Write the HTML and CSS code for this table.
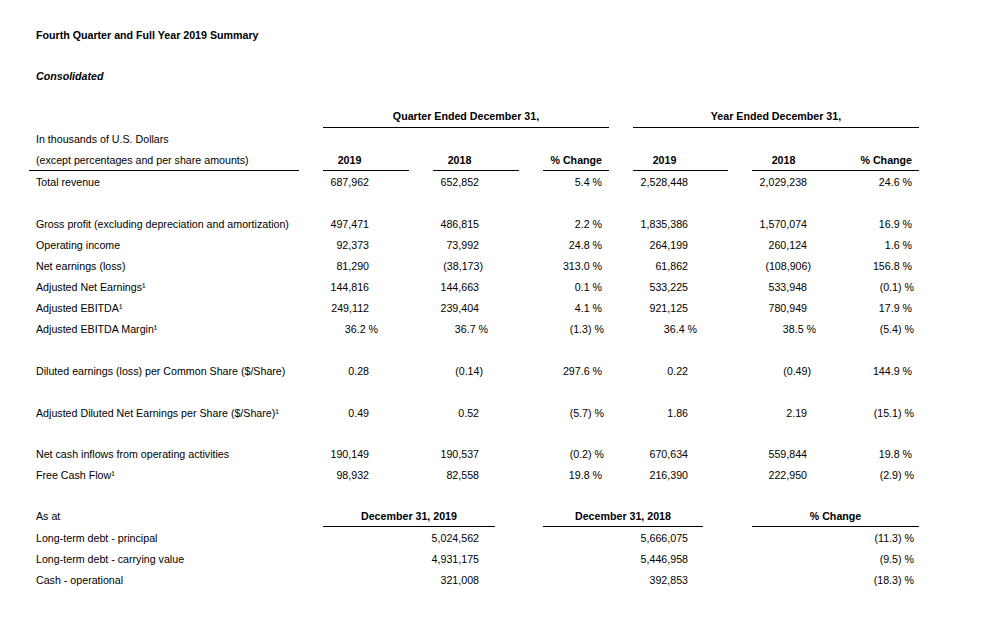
FILE: index.html
```html
<!DOCTYPE html>
<html>
<head>
<meta charset="utf-8">
<title>Fourth Quarter and Full Year 2019 Summary</title>
<link rel="stylesheet" href="styles.css">
</head>
<body>
<div class="page">
  <h1 class="title">Fourth Quarter and Full Year 2019 Summary</h1>
  <h2 class="sub">Consolidated</h2>

  <div class="tbl">
    <div class="row grp">
      <div class="grp-q">Quarter Ended December 31,</div>
      <div class="grp-y">Year Ended December 31,</div>
    </div>
    <div class="row"><div class="lab">In thousands of U.S. Dollars</div></div>
    <div class="row">
      <div class="lab rule">(except percentages and per share amounts)</div>
      <div class="q19 hq">2019</div>
      <div class="q18 hq">2018</div>
      <div class="qp hp">% Change</div>
      <div class="y19 hy">2019</div>
      <div class="y18 hy">2018</div>
      <div class="yp hp">% Change</div>
    </div>
    <div class="row">
      <div class="lab">Total revenue</div>
      <div class="q19 num">687,962</div>
      <div class="q18 num">652,852</div>
      <div class="qp pc">5.4 %</div>
      <div class="y19 num">2,528,448</div>
      <div class="y18 num">2,029,238</div>
      <div class="yp pc">24.6 %</div>
    </div>
    <div class="row"></div>
    <div class="row">
      <div class="lab">Gross profit (excluding depreciation and amortization)</div>
      <div class="q19 num">497,471</div>
      <div class="q18 num">486,815</div>
      <div class="qp pc">2.2 %</div>
      <div class="y19 num">1,835,386</div>
      <div class="y18 num">1,570,074</div>
      <div class="yp pc">16.9 %</div>
    </div>
    <div class="row">
      <div class="lab">Operating income</div>
      <div class="q19 num">92,373</div>
      <div class="q18 num">73,992</div>
      <div class="qp pc">24.8 %</div>
      <div class="y19 num">264,199</div>
      <div class="y18 num">260,124</div>
      <div class="yp pc">1.6 %</div>
    </div>
    <div class="row">
      <div class="lab">Net earnings (loss)</div>
      <div class="q19 num">81,290</div>
      <div class="q18 num"><span class="neg">(38,173)</span></div>
      <div class="qp pc">313.0 %</div>
      <div class="y19 num">61,862</div>
      <div class="y18 num"><span class="neg">(108,906)</span></div>
      <div class="yp pc">156.8 %</div>
    </div>
    <div class="row">
      <div class="lab">Adjusted Net Earnings¹</div>
      <div class="q19 num">144,816</div>
      <div class="q18 num">144,663</div>
      <div class="qp pc">0.1 %</div>
      <div class="y19 num">533,225</div>
      <div class="y18 num">533,948</div>
      <div class="yp pc"><span class="negp">(0.1) %</span></div>
    </div>
    <div class="row">
      <div class="lab">Adjusted EBITDA¹</div>
      <div class="q19 num">249,112</div>
      <div class="q18 num">239,404</div>
      <div class="qp pc">4.1 %</div>
      <div class="y19 num">921,125</div>
      <div class="y18 num">780,949</div>
      <div class="yp pc">17.9 %</div>
    </div>
    <div class="row">
      <div class="lab">Adjusted EBITDA Margin¹</div>
      <div class="q19 num"><span class="pct">36.2 %</span></div>
      <div class="q18 num"><span class="pct">36.7 %</span></div>
      <div class="qp pc"><span class="negp">(1.3) %</span></div>
      <div class="y19 num"><span class="pct">36.4 %</span></div>
      <div class="y18 num"><span class="pct">38.5 %</span></div>
      <div class="yp pc"><span class="negp">(5.4) %</span></div>
    </div>
    <div class="row"></div>
    <div class="row">
      <div class="lab">Diluted earnings (loss) per Common Share ($/Share)</div>
      <div class="q19 num">0.28</div>
      <div class="q18 num"><span class="neg">(0.14)</span></div>
      <div class="qp pc">297.6 %</div>
      <div class="y19 num">0.22</div>
      <div class="y18 num"><span class="neg">(0.49)</span></div>
      <div class="yp pc">144.9 %</div>
    </div>
    <div class="row"></div>
    <div class="row">
      <div class="lab">Adjusted Diluted Net Earnings per Share ($/Share)¹</div>
      <div class="q19 num">0.49</div>
      <div class="q18 num">0.52</div>
      <div class="qp pc"><span class="negp">(5.7) %</span></div>
      <div class="y19 num">1.86</div>
      <div class="y18 num">2.19</div>
      <div class="yp pc"><span class="negp">(15.1) %</span></div>
    </div>
    <div class="row short"></div>
    <div class="row">
      <div class="lab">Net cash inflows from operating activities</div>
      <div class="q19 num">190,149</div>
      <div class="q18 num">190,537</div>
      <div class="qp pc"><span class="negp">(0.2) %</span></div>
      <div class="y19 num">670,634</div>
      <div class="y18 num">559,844</div>
      <div class="yp pc">19.8 %</div>
    </div>
    <div class="row">
      <div class="lab">Free Cash Flow¹</div>
      <div class="q19 num">98,932</div>
      <div class="q18 num">82,558</div>
      <div class="qp pc">19.8 %</div>
      <div class="y19 num">216,390</div>
      <div class="y18 num">222,950</div>
      <div class="yp pc"><span class="negp">(2.9) %</span></div>
    </div>
    <div class="row short"></div>

    <div class="row bal">
      <div class="lab">As at</div>
      <div class="b1 hb">December 31, 2019</div>
      <div class="b2 hb">December 31, 2018</div>
      <div class="b3 hb">% Change</div>
    </div>
    <div class="row bal">
      <div class="lab">Long-term debt - principal</div>
      <div class="b1 bv1">5,024,562</div>
      <div class="b2 bv2">5,666,075</div>
      <div class="b3 bv3">(11.3) %</div>
    </div>
    <div class="row bal">
      <div class="lab">Long-term debt - carrying value</div>
      <div class="b1 bv1">4,931,175</div>
      <div class="b2 bv2">5,446,958</div>
      <div class="b3 bv3">(9.5) %</div>
    </div>
    <div class="row bal">
      <div class="lab">Cash - operational</div>
      <div class="b1 bv1">321,008</div>
      <div class="b2 bv2">392,853</div>
      <div class="b3 bv3">(18.3) %</div>
    </div>
  </div>
</div>
</body>
</html>
```

FILE: styles.css
```css
html, body {
  margin: 0;
  padding: 0;
  background: #ffffff;
}

body {
  color: #000000;
  font-family: "Liberation Sans", Arial, sans-serif;
  font-size: 10.67px;
}

.page {
  padding: 25px 0 0 29px;
}

.title {
  margin: 0 0 20px;
  padding-left: 7px;
  font-size: 10.67px;
  font-weight: bold;
  line-height: 21px;
}

.sub {
  margin: 0 0 19px;
  padding-left: 7px;
  font-size: 10.67px;
  font-weight: bold;
  font-style: italic;
  line-height: 21px;
}

.tbl {
  width: 890px;
}

.row {
  display: grid;
  grid-template-columns: 270px 24px 86px 24px 86px 24px 66px 24px 95px 24px 95px 72px;
  min-height: 21px;
}

.row.short {
  min-height: 20px;
}

.row.bal {
  grid-template-columns: 270px 24px 172px 48px 160px 49px 167px;
}

.row > div {
  white-space: nowrap;
  line-height: 19px;
  padding-top: 2px;
}

.row.grp > div {
  line-height: 21px;
  padding-top: 0;
}

.lab { grid-column: 1; padding-left: 7px; }
.q19 { grid-column: 3; }
.q18 { grid-column: 5; }
.qp  { grid-column: 7; }
.y19 { grid-column: 9; }
.y18 { grid-column: 11; }
.yp  { grid-column: 12; }

.b1 { grid-column: 3; }
.b2 { grid-column: 5; }
.b3 { grid-column: 7; }

.rule {
  border-bottom: 1px solid #000;
}

.grp-q,
.grp-y {
  text-align: center;
  font-weight: bold;
  border-bottom: 1px solid #000;
}
.grp-q { grid-column: 3 / 8; }
.grp-y { grid-column: 9 / 13; }

.hq,
.hy,
.hp,
.hb {
  font-weight: bold;
  border-bottom: 1px solid #000;
}
.hq { text-align: center; padding-right: 33px; }
.hy { text-align: center; padding-right: 32px; }
.hp { text-align: right; padding-right: 7px; }
.hb { text-align: center; }

.num { text-align: right; padding-right: 40px; }
.pc  { text-align: right; padding-right: 7px; }

.neg  { margin-right: -4px; }
.negp { margin-right: -2px; }
.pct  { margin-right: -9px; }

.bv1 { text-align: right; padding-right: 16px; }
.bv2 { text-align: right; padding-right: 15px; }
.bv3 { text-align: right; padding-right: 5px; }
```
